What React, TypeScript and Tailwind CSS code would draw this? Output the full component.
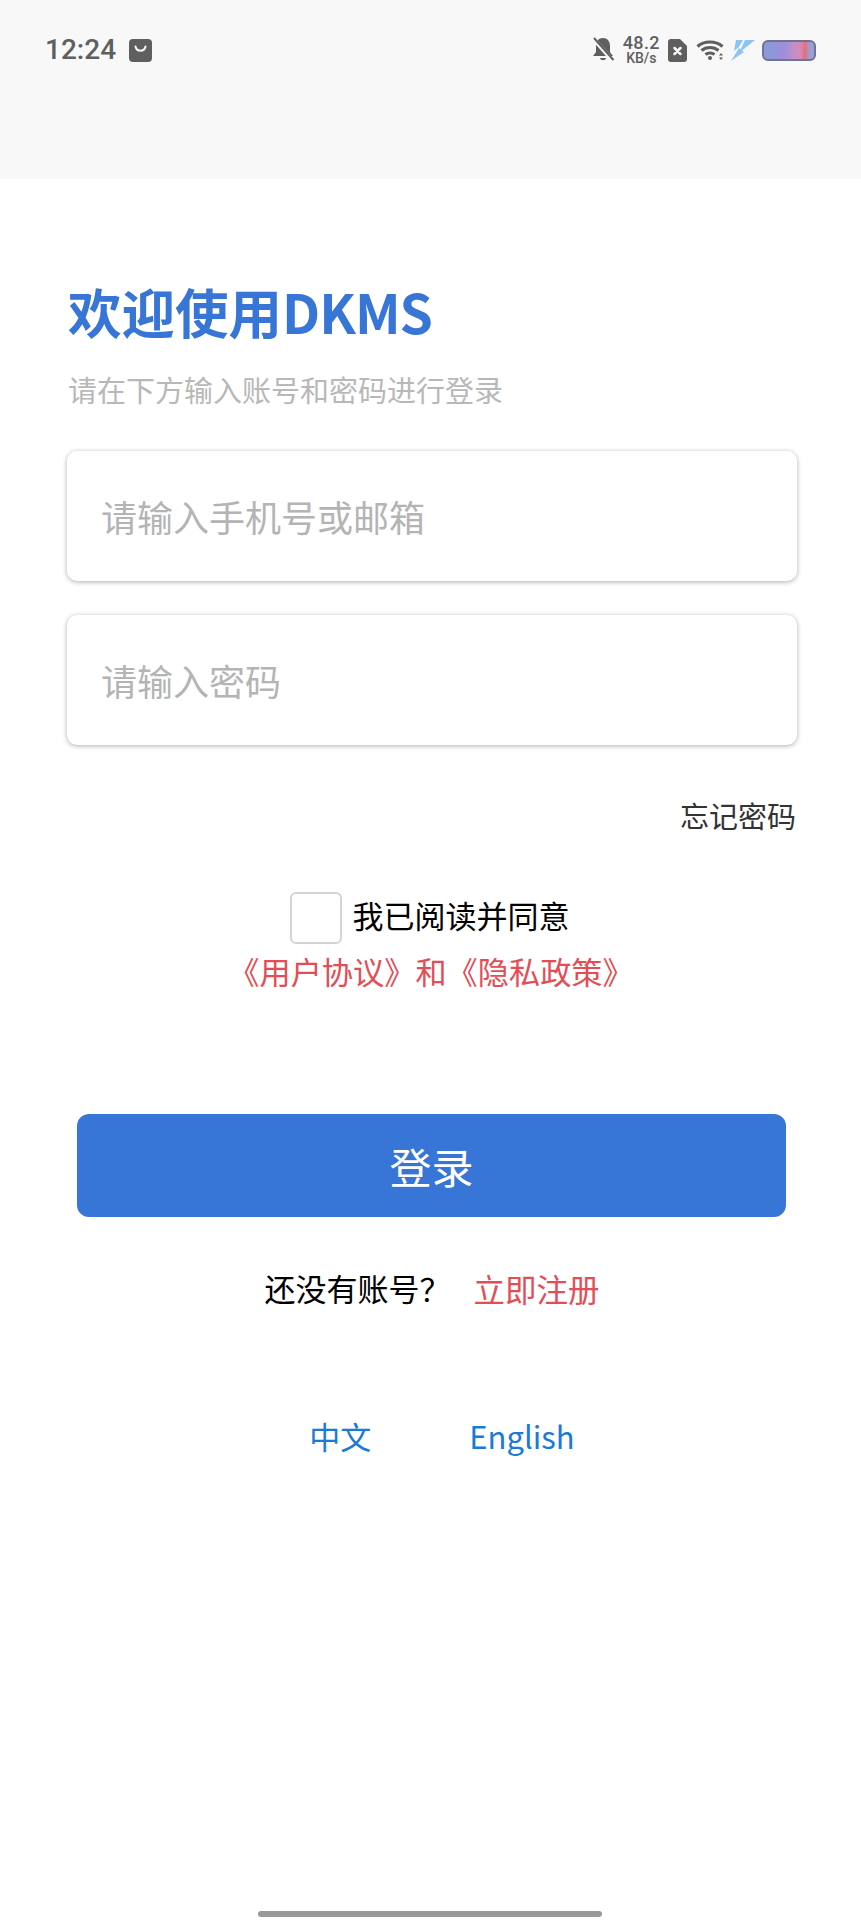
const FONT = "font-['Noto_Sans_CJK_SC','Noto_Sans',sans-serif]";

function StatusBar() {
  return (
    <div className="h-[179px] bg-[#f8f8f8] flex items-start justify-between pl-[45px] pr-[45px] pt-[32px] text-[#5f5f5f]">
      <div className="flex items-center gap-[13px] h-[36px]">
        <span className="font-['Roboto',sans-serif] font-medium text-[28px] leading-none">12:24</span>
        <svg width="23" height="23" viewBox="0 0 23 23">
          <rect width="23" height="23" rx="4" fill="#5f5f5f" />
          <path d="M6.500 7.500c1 5.500 9 5.500 10 0" fill="none" stroke="#f8f8f8" strokeWidth="2" strokeLinecap="round" />
        </svg>
      </div>
      <div className="flex items-center h-[36px]">
        <svg width="22" height="26" viewBox="0 0 22 26" fill="#5f5f5f" className="mr-[9px]">
          <path d="M11 1c4.500 0 7 3.500 7 8v6l3 4H1l3-4V9c0-4.500 2.500-8 7-8z" />
          <path d="M8 21h6c-.5 3-5.500 3-6 0z" />
          <path d="M1.500 2L21 24" stroke="#f8f8f8" strokeWidth="4" />
          <path d="M2 1l19.500 22" stroke="#5f5f5f" strokeWidth="2" />
        </svg>
        <div className="flex flex-col items-center font-['Roboto',sans-serif] font-medium leading-none mr-[8px]">
          <span className="text-[18px] leading-[17px] tracking-[0.4px]">48.2</span>
          <span className="text-[14px] leading-[15px]">KB/s</span>
        </div>
        <svg width="19" height="23" viewBox="0 0 19 23" className="mr-[9px]">
          <path d="M3 0h9l7 7v13a3 3 0 0 1-3 3H3a3 3 0 0 1-3-3V3a3 3 0 0 1 3-3z" fill="#5f5f5f" />
          <path d="M6.500 9l6 6M12.500 9l-6 6" stroke="#f8f8f8" strokeWidth="2.500" strokeLinecap="round" />
        </svg>
        <svg width="28" height="22" viewBox="0 0 28 22" fill="none" stroke="#5f5f5f" strokeWidth="3.200" className="mr-[7px]">
          <path d="M1.500 7.500C8 1.500 20 1.500 26.500 7.500" />
          <path d="M5.500 11.500c4.500-4 12.500-4 17 0" />
          <path d="M9.500 15.500c2.500-2 6.500-2 9 0" />
          <circle cx="14" cy="19" r="2" fill="#5f5f5f" stroke="none" />
          <path d="M25 14l-2 2.500h4zM25 21l-2-2.500h4z" fill="#5f5f5f" stroke="none" />
        </svg>
        <svg width="24" height="22" viewBox="0 0 24 22" fill="#8cc4f2" className="mr-[7px]">
          <path d="M5 1h7L8 8l-5 4zM14 1h10L8 14z" />
          <path d="M8 9L0 22l13-9z" />
        </svg>
        <div className="w-[54px] h-[21px] rounded-[6px] border-2 border-[#6d7393] bg-[linear-gradient(90deg,#8c98d8_0%,#8c98d8_22%,#a08be0_32%,#9c90d8_42%,#c090c8_58%,#d48bb8_72%,#e0707f_82%,#9aa0d4_92%)]" />
      </div>
    </div>
  );
}

function TextBox({ placeholder }: { placeholder: string }) {
  return (
    <div className="h-[130px] rounded-[10px] bg-white shadow-[0_1px_5px_rgba(0,0,0,0.32)] flex items-center pl-[34px] text-[36px] text-[#b4b4b4]">
      {placeholder}
    </div>
  );
}

export default function App() {
  return (
    <div className={`min-h-[1920px] bg-white flex flex-col ${FONT}`}>
      <StatusBar />

      <div className="flex-1 flex flex-col px-[68px] pt-[94px] relative">
        <h1 className="text-[53.500px] leading-[76px] font-bold text-[#3776d6]">
          欢迎使用<span className="tracking-[-1px]">DKMS</span>
        </h1>
        <p className="text-[29px] leading-[42px] text-[#b8b8b8] mt-[19px]">请在下方输入账号和密码进行登录</p>

        <div className="flex flex-col gap-[34px] mt-[41px] w-[730px] -ml-[1px]">
          <TextBox placeholder="请输入手机号或邮箱" />
          <TextBox placeholder="请输入密码" />
        </div>

        <div className="text-right text-[29px] leading-[42px] text-[#333] mt-[49px] w-[728px]">忘记密码</div>

        <div className="flex items-center justify-center gap-[11px] mt-[56px] w-[728px] pr-[5px]">
          <div className="w-[52px] h-[52px] rounded-[6px] border-2 border-[#d4d4d4] bg-white" />
          <span className="text-[31px] leading-[44px] text-black mb-[7px]">我已阅读并同意</span>
        </div>
        <div className="text-center text-[31.200px] leading-[44px] text-[#e34d55] mt-[5px] w-[728px] pr-[2px]">《用户协议》和《隐私政策》</div>

        <button className="mt-[121px] ml-[9px] w-[709px] h-[103px] rounded-[12px] bg-[#3776d6] text-white text-[42px]">登录</button>

        <div className="flex justify-center items-center mt-[49px] w-[728px] leading-[44px]">
          <span className="text-black text-[31px]">还没有账号？</span>
          <span className="text-[#e34d55] text-[31.500px] ml-[23px]">立即注册</span>
        </div>

        <div className="flex justify-center gap-[98px] mt-[104px] w-[728px] pl-[20px] text-[31px] leading-[44px] text-[#1a7ad4]">
          <span>中文</span>
          <span>English</span>
        </div>
      </div>

      <div className="absolute left-[258px] top-[1911px] w-[344px] h-[6px] rounded-full bg-[#999]" />
    </div>
  );
}
